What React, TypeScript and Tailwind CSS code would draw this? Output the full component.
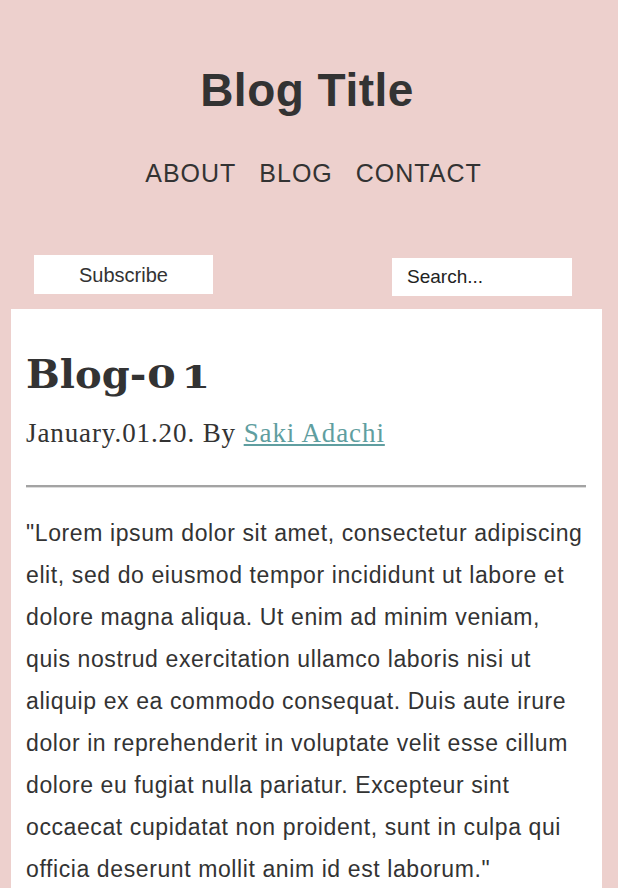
import React from "react";

export default function App() {
  return (
    <div className="min-h-[888px] w-full bg-[#edd0cd] pb-10" style={{ fontFamily: '"Liberation Sans", Arial, sans-serif' }}>
      <header className="flex flex-col items-center pt-[67px]">
        <h1 className="text-[46px] leading-[46px] font-bold text-[#333] tracking-[0.5px] pr-[4px]">Blog Title</h1>
        <nav className="mt-[48px] flex gap-[23px] pl-[9px] text-[25px] leading-[25px] tracking-[1px] text-[#333]">
          <a>ABOUT</a>
          <a>BLOG</a>
          <a>CONTACT</a>
        </nav>
      </header>
      <div className="mt-[69px] flex items-start">
        <button className="ml-[34px] h-[39px] w-[179px] bg-white text-[20px] text-[#333]">Subscribe</button>
        <div className="ml-[179px] mt-[3px] flex h-[38px] w-[180px] items-center bg-white pl-[15px] text-[19px] text-[#222]">Search...</div>
      </div>
      <main className="ml-[11px] mt-[13px] w-[591px] bg-white pb-[60px] pl-[15px] pr-[16px] pt-[44px]">
        <h2 className="flex items-baseline text-[40px] font-bold leading-[41px] text-[#333]" style={{ fontFamily: '"DejaVu Serif", Georgia, serif' }}>
          <span>Blog-</span>
          <span className="ml-[1px] inline-block w-[66px] origin-left scale-x-[1.3] text-[32px] tracking-[4px]">01</span>
        </h2>
        <p className="mt-[22px] text-[27px] leading-[26px] tracking-[0.9px] text-[#333]" style={{ fontFamily: '"Liberation Serif", "Times New Roman", serif' }}>
          January.01.20. By <a className="text-[#5f9ea0] underline">Saki Adachi</a>
        </p>
        <div className="mt-[39px] h-[3px] border-t-2 border-b border-t-[#a3a3a3] border-b-[#dcdcdc]" />
        <p className="mt-[24px] text-[23px] leading-[42px] tracking-[0.6px] text-[#333]">
          "Lorem ipsum dolor sit amet, consectetur adipiscing elit, sed do eiusmod tempor incididunt ut labore et dolore magna aliqua. Ut enim ad minim veniam, quis nostrud exercitation ullamco laboris nisi ut aliquip ex ea commodo consequat. Duis aute irure dolor in reprehenderit in voluptate velit esse cillum dolore eu fugiat nulla pariatur. Excepteur sint occaecat cupidatat non proident, sunt in culpa qui officia deserunt mollit anim id est laborum."
        </p>
      </main>
    </div>
  );
}
